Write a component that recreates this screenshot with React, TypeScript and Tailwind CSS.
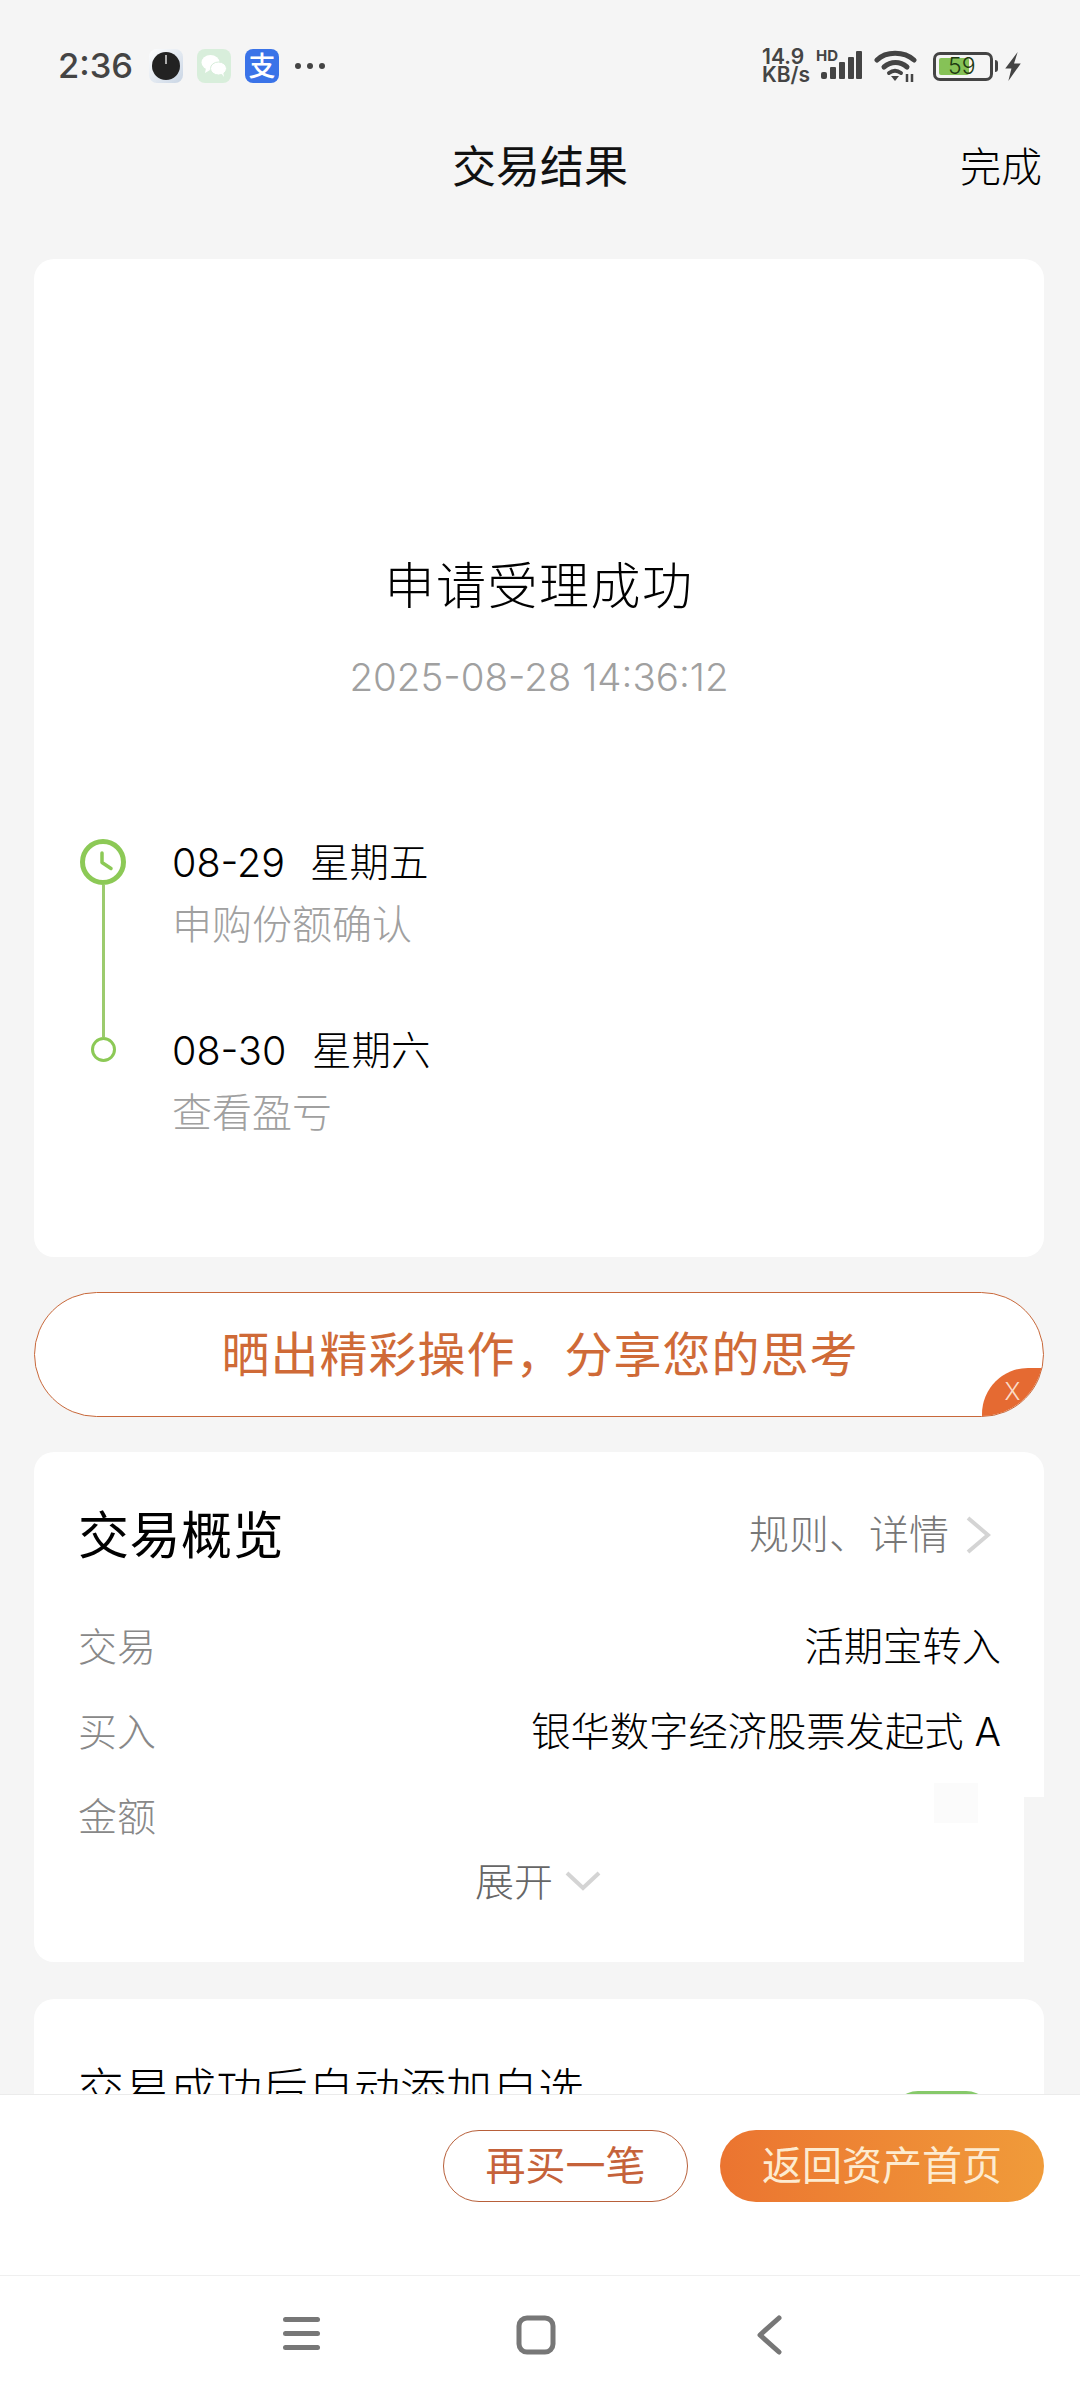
function ChevronRightIcon() {
  return (
    <svg className="ml-[16px] mr-[10px]" width="26" height="38" viewBox="0 0 26 38" fill="none" stroke="#d4d4d4" strokeWidth="4">
      <path d="M3 2l20 17L3 36" />
    </svg>
  )
}

function ChevronDownIcon() {
  return (
    <svg className="ml-[12px]" width="36" height="20" viewBox="0 0 36 20" fill="none" stroke="#d4d4d4" strokeWidth="4">
      <path d="M2 2l16 15L34 2" />
    </svg>
  )
}

function StatusBar() {
  return (
    <div className="h-[132px] pl-[58px] pr-[58px] flex items-center justify-between">
      <div className="flex items-center">
        <span className="text-[34.500px] leading-none font-medium text-[#444] w-[91px]">2:36</span>
        {/* clock app */}
        <div className="w-[34px] h-[34px] rounded-[8px] bg-gradient-to-br from-white to-[#c9d5e4] flex items-center justify-center">
          <svg width="28" height="28" viewBox="0 0 28 28">
            <circle cx="14" cy="14" r="14" fill="#222" />
            <path d="M14 3v9" stroke="#ddd" strokeWidth="1.5" />
          </svg>
        </div>
        {/* wechat */}
        <div className="ml-[14px] w-[34px] h-[34px] rounded-[8px] bg-[#d8eedb] flex items-center justify-center">
          <svg width="26" height="24" viewBox="0 0 26 24" fill="#fff">
            <ellipse cx="9.5" cy="8.5" rx="9" ry="7.5" />
            <ellipse cx="17.5" cy="14.5" rx="8" ry="6.5" fill="#fff" stroke="#d8eedb" strokeWidth="1" />
            <path d="M5 14l-1 5 5-3zM20 19l3 4-1-6z" />
          </svg>
        </div>
        {/* alipay */}
        <div className="ml-[14px] w-[34px] h-[34px] rounded-[8px] bg-[#3a73e8] flex items-center justify-center text-white text-[27px] leading-none font-medium">
          支
        </div>
        <div className="ml-[16px] flex gap-[6px]">
          <div className="w-[6px] h-[6px] rounded-full bg-[#444]" />
          <div className="w-[6px] h-[6px] rounded-full bg-[#444]" />
          <div className="w-[6px] h-[6px] rounded-full bg-[#444]" />
        </div>
      </div>
      <div className="flex items-center">
        <div className="flex flex-col text-[#444] text-[21px] leading-[18px] font-semibold w-[54px]">
          <span>14.9</span>
          <span>KB/s</span>
        </div>
        <div className="relative w-[46px] h-[32px]">
          <span className="absolute left-0 -top-[1px] text-[15px] leading-[14px] font-bold text-[#444]">HD</span>
          <svg className="absolute left-[5px] top-0" width="41" height="30" viewBox="0 0 41 30" fill="#444">
            <rect x="0" y="22" width="6" height="7" rx="2" />
            <rect x="9" y="17" width="6" height="12" rx="1" />
            <rect x="18" y="12" width="6" height="17" rx="1" />
            <rect x="27" y="7" width="6" height="22" rx="1" />
            <rect x="35" y="1" width="6" height="28" rx="1" />
          </svg>
        </div>
        <svg className="ml-[12px]" width="44" height="32" viewBox="0 0 44 32" fill="none" stroke="#444" strokeWidth="5" strokeLinecap="round">
          <path d="M3 10C12 1 30 1 40 10" />
          <path d="M10 17c7-6 16-6 23 0" />
          <path d="M15 23c4-3 8-3 12 0" strokeWidth="4" />
          <path d="M17 26h8l-4 5z" fill="#444" stroke="none" />
          <path d="M33 24v8M38 24v8" strokeWidth="2.500" strokeLinecap="butt" />
        </svg>
        <div className="ml-[15px] relative w-[60px] h-[29px] rounded-[7px] border-[3px] border-[#444] p-[3px] flex">
          <div className="w-[30px] bg-[#86c257] rounded-[2px]" />
          <span className="absolute left-[12px] top-0 h-full flex items-center text-[23px] leading-none font-light text-[#1d3a12]">59</span>
        </div>
        <div className="ml-[2px] w-[3px] h-[12px] rounded-r-full bg-[#444]" />
        <svg className="ml-[6px]" width="18" height="29" viewBox="0 0 17 28" fill="#444">
          <path d="M13 0 1 16h6L4 28 16 11H9.500z" />
        </svg>
      </div>
    </div>
  )
}

function Timeline() {
  return (
    <div className="mt-[135px] ml-[46px] flex items-start">
      <div className="mt-[2px] w-[46px] flex flex-col items-center">
        <svg width="46" height="46" viewBox="0 0 46 46" fill="none" stroke="#8cc956">
          <circle cx="23" cy="23" r="20.500" strokeWidth="5" />
          <path d="M22 14v9.500l9 6" strokeWidth="3.500" strokeLinecap="round" strokeLinejoin="round" />
        </svg>
        <div className="w-[3px] h-[152px] bg-[#9ccb6e]" />
        <div className="w-[25px] h-[25px] rounded-full border-[3px] border-[#8cc956]" />
      </div>
      <div className="ml-[46px] mt-[2px]">
        <div className="h-[50px] flex items-center text-[39.500px] leading-none text-black font-light">
          <span className="w-[138px]">08-29</span>
          <span>星期五</span>
        </div>
        <div className="mt-[11px] h-[50px] leading-[50px] text-[40px] text-[#a0a0a0] font-light">申购份额确认</div>
        <div className="mt-[77px] h-[50px] flex items-center text-[39.500px] leading-none text-black font-light">
          <span className="w-[140px]">08-30</span>
          <span>星期六</span>
        </div>
        <div className="mt-[11px] h-[50px] leading-[50px] text-[40px] text-[#a0a0a0] font-light">查看盈亏</div>
      </div>
    </div>
  )
}

const rows = [
  { label: '交易', value: '活期宝转入' },
  { label: '买入', value: '银华数字经济股票发起式 A' },
  { label: '金额', value: '' },
]

export default function App() {
  return (
    <div className="h-[2400px] w-[1080px] bg-[#f5f5f5] flex flex-col font-['Inter','Noto_Sans_CJK_SC',sans-serif]">
      <StatusBar />

      {/* Nav */}
      <div className="relative h-[70px] flex items-center justify-center shrink-0">
        <span className="text-[44px] leading-none text-[#111]">交易结果</span>
        <span className="absolute right-[38px] top-[15px] text-[41px] leading-none font-light text-black">完成</span>
      </div>

      <div className="flex-1 overflow-hidden pl-[34px] pr-[36px] pt-[57px]">
        {/* Result card */}
        <div className="bg-white rounded-[20px] h-[998px] pt-[292px]">
          <div className="text-center text-[50px] leading-[70px] text-black font-light tracking-[1.500px]">申请受理成功</div>
          <div className="mt-[31px] text-center text-[38.500px] leading-[50px] text-[#a0a0a0] font-light">2025-08-28 14:36:12</div>
          <Timeline />
        </div>

        {/* Share banner */}
        <div className="relative mt-[35px] h-[125px] rounded-full border border-[#c8683a] bg-white overflow-hidden flex items-center justify-center">
          <span className="ml-[2px] text-[48px] leading-none text-[#cf6a37] tracking-[1px]">晒出精彩操作，分享您的思考</span>
          <div className="absolute right-0 bottom-0 w-[61px] h-[48px] rounded-tl-[46px] bg-[#e56a32] flex items-center justify-center text-[24px] leading-none font-light text-[#fbdcc8]">
            X
          </div>
        </div>

        {/* Overview card */}
        <div className="relative mt-[35px] h-[510px] bg-white rounded-[20px] pt-[53px] pl-[44px] pr-[43px]">
          <div className="flex items-center justify-between h-[60px]">
            <span className="text-[51px] leading-none text-black tracking-[0.500px]">交易概览</span>
            <div className="flex items-center text-[40px] leading-none text-[#777] font-light">
              规则、详情
              <ChevronRightIcon />
            </div>
          </div>
          <div className="mt-[39px]">
            {rows.map((row) => (
              <div key={row.label} className="h-[85px] flex items-center justify-between">
                <span className="text-[39px] leading-none text-[#888] font-light">{row.label}</span>
                <span className="text-[39.300px] leading-none text-black font-light">{row.value}</span>
              </div>
            ))}
          </div>
          <div className="h-[44px] -ml-[3px] flex items-center justify-center text-[39px] leading-none text-[#666] font-light">
            展开
            <ChevronDownIcon />
          </div>
          {/* retouched patches on the right edge */}
          <div className="absolute right-0 top-[345px] bottom-0 w-[20px] bg-[#f5f5f5]" />
          <div className="absolute left-[900px] top-[331px] w-[44px] h-[40px] bg-[#fbfbfb]" />
        </div>

        {/* Auto add card */}
        <div className="mt-[37px] h-[300px] bg-white rounded-[20px] pt-[60px] pl-[44px] pr-[50px] flex items-start justify-between">
          <span className="text-[46px] leading-[60px] text-black font-light">交易成功后自动添加自选</span>
          <div className="mt-[32px] w-[104px] h-[56px] rounded-full bg-[#86c96a]" />
        </div>
      </div>

      {/* Footer actions */}
      <div className="h-[181px] shrink-0 bg-white border-t border-[#ebebeb] px-[36px] pt-[35px] flex items-start justify-end gap-[32px]">
        <div className="w-[245px] h-[72px] rounded-full border border-[#b8603a] flex items-center justify-center text-[40px] leading-none text-[#c5623a]">
          再买一笔
        </div>
        <div className="w-[324px] h-[72px] rounded-full bg-gradient-to-r from-[#eb7430] to-[#f09b3a] flex items-center justify-center text-[40px] leading-none text-[#fdebd0]">
          返回资产首页
        </div>
      </div>

      {/* System nav */}
      <div className="h-[125px] shrink-0 bg-white border-t border-[#efefef] relative">
        <svg className="absolute left-[283px] top-[40px]" width="38" height="36" viewBox="0 0 38 36" fill="#777">
          <rect x="0" y="1" width="37" height="5" rx="2.500" />
          <rect x="0" y="15" width="37" height="5" rx="2.500" />
          <rect x="0" y="29" width="37" height="5" rx="2.500" />
        </svg>
        <svg className="absolute left-[516px] top-[39px]" width="40" height="40" viewBox="0 0 40 40" fill="none" stroke="#777" strokeWidth="5">
          <rect x="3" y="3" width="34" height="34" rx="8" />
        </svg>
        <svg className="absolute left-[755px] top-[39px]" width="28" height="40" viewBox="0 0 28 40" fill="none" stroke="#777" strokeWidth="5" strokeLinecap="round" strokeLinejoin="round">
          <path d="M24 3 5 20l19 17" />
        </svg>
      </div>
    </div>
  )
}
